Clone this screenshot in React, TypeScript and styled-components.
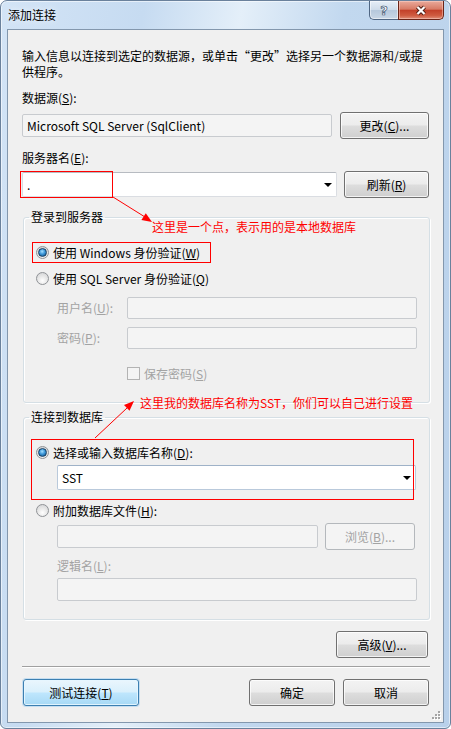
import React from "react";
import styled, { createGlobalStyle, css } from "styled-components";

const GlobalStyle = createGlobalStyle`
  html, body {
    margin: 0;
    padding: 0;
    background: #ffffff;
  }
  * {
    box-sizing: border-box;
  }
  body {
    font-family: "Noto Sans CJK SC", "Noto Sans", sans-serif;
    font-size: 12px;
    color: #000;
  }
`;

// Window frame
const Window = styled.div`
  position: relative;
  width: 451px;
  height: 729px;
  display: flex;
  flex-direction: column;
  border: 1px solid #6a819c;
  border-radius: 7px 7px 6px 6px;
  overflow: hidden;
  background: linear-gradient(
    100deg,
    #d3e4f6 0%,
    #c6dbf1 25%,
    #e4eff9 42%,
    #c2d8ef 60%,
    #b8d0ea 100%
  );
  box-shadow: inset 0 0 0 1px rgba(255, 255, 255, 0.55);
`;

const TitleBar = styled.div`
  height: 28px;
  display: flex;
  align-items: flex-start;
  padding: 6px 0 0 7px;
`;

const Title = styled.div`
  line-height: 16px;
  font-size: 12px;
  color: #000;
  text-shadow: 0 0 6px rgba(255, 255, 255, 0.9);
`;

const CaptionButtons = styled.div`
  margin: -6px 6px 0 auto;
  display: flex;
`;

const captionBase = css`
  height: 19px;
  display: flex;
  align-items: center;
  justify-content: center;
  border: 1px solid #4f6683;
  border-top: none;
`;

const HelpButton = styled.div`
  ${captionBase};
  width: 29px;
  border-radius: 0 0 0 5px;
  border-right: none;
  background: linear-gradient(#e6eef7 0%, #cfdcea 48%, #b6c8dc 52%, #c9d7e6 100%);
  box-shadow: inset 0 0 0 1px rgba(255, 255, 255, 0.5);
  font-family: "DejaVu Sans", sans-serif;
  font-weight: bold;
  font-size: 13px;
  color: #fff;
  -webkit-text-stroke: 0.7px #3c546f;
`;

const CloseButton = styled.div`
  ${captionBase};
  width: 46px;
  border-color: #6b2417;
  border-radius: 0 0 5px 0;
  background: linear-gradient(#eaaa9b 0%, #d87b66 45%, #c3412a 52%, #cf5b40 80%, #e08e78 100%);
  box-shadow: inset 0 0 0 1px rgba(255, 220, 210, 0.45);
`;

// Client area
const Client = styled.div`
  position: relative;
  flex: 1;
  margin: 0 6px 5px 6px;
  border: 1px solid #8397ad;
  background: #f0f0f0;
  display: flex;
  flex-direction: column;
  padding: 18px 13px 0 14px;
`;

const Intro = styled.p`
  margin: 0;
  line-height: 16px;
  white-space: nowrap;
`;

const Label = styled.div<{ $mt?: number; $disabled?: boolean; $indent?: number }>`
  margin-top: ${(p) => p.$mt ?? 0}px;
  padding-left: ${(p) => p.$indent ?? 0}px;
  line-height: 16px;
  white-space: nowrap;
  color: ${(p) => (p.$disabled ? "#a3a3a3" : "#000")};
`;

const Row = styled.div<{ $mt?: number; $gap?: number; $indent?: number; $right?: number }>`
  display: flex;
  align-items: center;
  height: 27px;
  margin-top: ${(p) => p.$mt ?? 0}px;
  padding-left: ${(p) => p.$indent ?? 0}px;
  padding-right: ${(p) => p.$right ?? 1}px;
  gap: ${(p) => p.$gap ?? 8}px;
`;

const TextBox = styled.div`
  flex: 1;
  height: 23px;
  display: flex;
  align-items: center;
  padding-left: 4px;
  border: 1px solid #c8cbcf;
  border-radius: 2px;
  background: #f4f4f4;
  white-space: nowrap;
`;

const ComboBox = styled.div<{ $active?: boolean }>`
  flex: 1;
  height: 25px;
  display: flex;
  align-items: center;
  justify-content: space-between;
  padding: 0 4px 0 4px;
  background: #fff;
  border: 1px solid ${(p) => (p.$active ? "#b9c9db" : "#dadde2")};
  border-top-color: ${(p) => (p.$active ? "#9fb2c8" : "#b7bbc1")};
  border-radius: 2px;
`;

const DropArrow = styled.span`
  width: 0;
  height: 0;
  border-left: 4px solid transparent;
  border-right: 4px solid transparent;
  border-top: 4px solid #000;
  margin-top: 1px;
`;

type ButtonKind = "normal" | "focused" | "disabled";

const Button = styled.div<{ $width: number; $kind?: ButtonKind; $ml?: number }>`
  flex: none;
  width: ${(p) => p.$width}px;
  height: 27px;
  margin-left: ${(p) => p.$ml ?? 0}px;
  display: flex;
  align-items: center;
  justify-content: center;
  border-radius: 3px;
  white-space: nowrap;
  border: 1px solid #707070;
  background: linear-gradient(#f3f3f3 0%, #ececec 48%, #dddddd 52%, #cfcfcf 100%);
  box-shadow: inset 0 0 0 1px rgba(255, 255, 255, 0.75);
  ${(p) =>
    p.$kind === "focused" &&
    css`
      border-color: #3c7fb1;
      background: linear-gradient(#eaf6fd 0%, #d9f0fc 48%, #bee6fd 52%, #a7d9f5 100%);
      box-shadow: inset 0 0 0 1px rgba(230, 246, 255, 0.9), 0 0 0 1px rgba(120, 190, 240, 0.35);
    `}
  ${(p) =>
    p.$kind === "disabled" &&
    css`
      border-color: #b4b8bc;
      background: #f4f4f4;
      box-shadow: none;
      color: #a3a3a3;
    `}
`;

// Group boxes
const Group = styled.fieldset<{ $mt: number; $pb: number }>`
  margin: ${(p) => p.$mt}px 0 0 1px;
  padding: 18px 12px ${(p) => p.$pb}px 12px;
  min-width: 0;
  border: 1px solid #d5dfe5;
  border-radius: 3px;
  box-shadow: inset 1px 1px 0 #fff, 1px 1px 0 #fff;
  display: flex;
  flex-direction: column;
`;

const GroupTitle = styled.legend`
  margin-left: -7px;
  padding: 0 2px;
  line-height: 16px;
  font-size: 12px;
`;

const OptionRow = styled.div<{ $mt?: number; $indent?: number; $disabled?: boolean }>`
  display: flex;
  align-items: center;
  gap: 4px;
  height: 18px;
  margin-top: ${(p) => p.$mt ?? 0}px;
  padding-left: ${(p) => p.$indent ?? 0}px;
  white-space: nowrap;
  color: ${(p) => (p.$disabled ? "#a3a3a3" : "#000")};
`;

const Radio = styled.span<{ $checked?: boolean }>`
  flex: none;
  width: 13px;
  height: 13px;
  border-radius: 50%;
  border: 1px solid #8f9296;
  background: radial-gradient(circle at 50% 70%, #ffffff 0%, #e9e9e9 45%, #cfd0d2 100%);
  display: flex;
  align-items: center;
  justify-content: center;
  &::after {
    content: "";
    display: ${(p) => (p.$checked ? "block" : "none")};
    width: 7px;
    height: 7px;
    border-radius: 50%;
    border: 1px solid #173f63;
    background: radial-gradient(circle at 45% 35%, #a6e0ff 0%, #3c97d9 45%, #0f4a7d 100%);
  }
`;

const CheckBox = styled.span`
  flex: none;
  width: 13px;
  height: 13px;
  border: 1px solid #b3b3b3;
  background: #f4f4f4;
`;

const FieldRow = styled.div<{ $mt: number }>`
  display: flex;
  align-items: center;
  margin-top: ${(p) => p.$mt}px;
  padding-left: 21px;
`;

const FieldLabel = styled.span`
  width: 70px;
  flex: none;
  line-height: 16px;
  color: #a3a3a3;
  white-space: nowrap;
`;

const DisabledBox = styled.div<{ $height?: number }>`
  flex: 1;
  height: ${(p) => p.$height ?? 22}px;
  border: 1px solid #c8cbcf;
  border-radius: 2px;
  background: #f4f4f4;
`;

const Separator = styled.div`
  margin-top: 8px;
  height: 2px;
  border-top: 1px solid #a0a0a0;
  border-bottom: 1px solid #ffffff;
`;

const Gripper = styled.svg`
  position: absolute;
  right: 2px;
  bottom: 2px;
`;

const Spacer = styled.div`
  flex: 1;
`;

// Red annotations laid over the screenshot
const Annotations = styled.svg`
  position: absolute;
  left: -1px;
  top: -1px;
  pointer-events: none;
`;

const Note = styled.span<{ $left: number; $top: number }>`
  position: absolute;
  left: ${(p) => p.$left}px;
  top: ${(p) => p.$top}px;
  line-height: 16px;
  font-size: 12px;
  color: #ff0000;
  white-space: nowrap;
  pointer-events: none;
`;

const gripDots = [
  [6, 0],
  [6, 3],
  [3, 3],
  [6, 6],
  [3, 6],
  [0, 6],
];

const App = () => {
  return (
    <>
      <GlobalStyle />
      <Window>
        <TitleBar>
          <Title>添加连接</Title>
          <CaptionButtons>
            <HelpButton>?</HelpButton>
            <CloseButton>
              <svg width="14" height="11" viewBox="0 0 14 11">
                <path d="M3.5 2 L10.5 9 M10.5 2 L3.5 9" stroke="#4b1a11" strokeWidth="4" />
                <path d="M3.5 2 L10.5 9 M10.5 2 L3.5 9" stroke="#ffffff" strokeWidth="2.2" />
              </svg>
            </CloseButton>
          </CaptionButtons>
        </TitleBar>

        <Client>
          <Intro>
            输入信息以连接到选定的数据源，或单击“更改”选择另一个数据源和/或提
            <br />
            供程序。
          </Intro>

          <Label $mt={10}>
            数据源(<u>S</u>):
          </Label>
          <Row $mt={6}>
            <TextBox>Microsoft SQL Server (SqlClient)</TextBox>
            <Button $width={89}>
              <span>
                更改(<u>C</u>)...
              </span>
            </Button>
          </Row>

          <Label $mt={11}>
            服务器名(<u>E</u>):
          </Label>
          <Row $mt={5} $gap={7}>
            <ComboBox>
              <span>.</span>
              <DropArrow />
            </ComboBox>
            <Button $width={85}>
              <span>
                刷新(<u>R</u>)
              </span>
            </Button>
          </Row>

          <Group $mt={11} $pb={20}>
            <GroupTitle>登录到服务器</GroupTitle>
            <OptionRow>
              <Radio $checked />
              <span>
                使用 Windows 身份验证(<u>W</u>)
              </span>
            </OptionRow>
            <OptionRow $mt={8}>
              <Radio />
              <span>
                使用 SQL Server 身份验证(<u>Q</u>)
              </span>
            </OptionRow>
            <FieldRow $mt={10}>
              <FieldLabel>
                用户名(<u>U</u>):
              </FieldLabel>
              <DisabledBox />
            </FieldRow>
            <FieldRow $mt={8}>
              <FieldLabel>
                密码(<u>P</u>):
              </FieldLabel>
              <DisabledBox />
            </FieldRow>
            <OptionRow $mt={15} $indent={91} $disabled>
              <CheckBox />
              <span>
                保存密码(<u>S</u>)
              </span>
            </OptionRow>
          </Group>

          <Group $mt={6} $pb={16}>
            <GroupTitle>连接到数据库</GroupTitle>
            <OptionRow>
              <Radio $checked />
              <span>
                选择或输入数据库名称(<u>D</u>):
              </span>
            </OptionRow>
            <Row $mt={3} $indent={21} $right={1}>
              <ComboBox $active>
                <span>SST</span>
                <DropArrow />
              </ComboBox>
            </Row>
            <OptionRow $mt={10}>
              <Radio />
              <span>
                附加数据库文件(<u>H</u>):
              </span>
            </OptionRow>
            <Row $mt={4} $indent={21} $gap={7} $right={2}>
              <DisabledBox $height={23} />
              <Button $width={90} $kind="disabled">
                <span>
                  浏览(<u>B</u>)...
                </span>
              </Button>
            </Row>
            <Label $mt={8} $indent={21} $disabled>
              逻辑名(<u>L</u>):
            </Label>
            <Row $mt={2} $indent={21} $right={0}>
              <DisabledBox $height={23} />
            </Row>
          </Group>

          <Row $mt={11} $right={2}>
            <Spacer />
            <Button $width={92}>
              <span>
                高级(<u>V</u>)...
              </span>
            </Button>
          </Row>

          <Separator />

          <Row $mt={11}>
            <Button $width={116} $kind="focused" $ml={1}>
              <span>
                测试连接(<u>T</u>)
              </span>
            </Button>
            <Spacer />
            <Button $width={86}>确定</Button>
            <Button $width={86}>取消</Button>
          </Row>

          <Gripper width="9" height="9" viewBox="0 0 9 9">
            {gripDots.map(([x, y]) => (
              <g key={`${x}-${y}`}>
                <rect x={x + 1} y={y + 1} width="2" height="2" fill="#ffffff" />
                <rect x={x} y={y} width="2" height="2" fill="#a5a5a5" />
              </g>
            ))}
          </Gripper>
        </Client>

        <Annotations width="451" height="729" viewBox="0 0 451 729">
          <g fill="none" stroke="#ff0000" strokeWidth="1">
            <rect x="20.5" y="171.5" width="92" height="26" />
            <rect x="32.5" y="242.5" width="178" height="20" />
            <rect x="31.5" y="439.5" width="382" height="60" />
            <line x1="113" y1="197" x2="145" y2="217" />
            <line x1="95" y1="438" x2="127" y2="408" />
          </g>
          <polygon points="152,222 141.4,220 145.8,213.2" fill="#ff0000" />
          <polygon points="134,401 129.5,410.8 124,405" fill="#ff0000" />
        </Annotations>
        <Note $left={151} $top={218}>
          这里是一个点，表示用的是本地数据库
        </Note>
        <Note $left={139} $top={394}>
          这里我的数据库名称为SST，你们可以自己进行设置
        </Note>
      </Window>
    </>
  );
};

export default App;
